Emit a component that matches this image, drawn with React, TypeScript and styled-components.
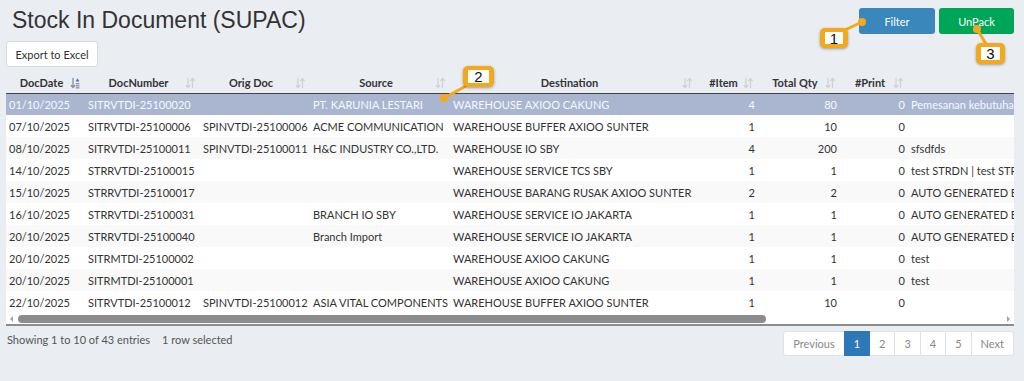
import React from 'react';
import styled, { createGlobalStyle, css } from 'styled-components';

const Global = createGlobalStyle`
  html, body { margin: 0; padding: 0; background: #eaedf2; }
  body { font-family: Lato, "Open Sans", sans-serif; color: #333; }
  * { box-sizing: border-box; }
`;

const Page = styled.div`
  position: relative;
  width: 1024px;
  height: 381px;
  padding: 0 10px 0 6px;
  overflow: hidden;
`;

const TopBar = styled.div`
  display: flex;
  justify-content: space-between;
  align-items: flex-start;
`;

const TitleBlock = styled.div`
  display: flex;
  flex-direction: column;
  align-items: flex-start;
`;

const Title = styled.h1`
  margin: 6px 0 0 6px;
  height: 28px;
  font: 400 23px/28px "Liberation Sans", Arial, sans-serif;
  color: #333;
`;

const ExportButton = styled.button`
  margin-top: 7px;
  height: 26px;
  width: 92px;
  padding: 0;
  background: #fff;
  border: 1px solid #d6d9de;
  border-radius: 3px;
  font: 400 11px Lato, sans-serif;
  color: #333;
`;

const ActionGroup = styled.div`
  display: flex;
  gap: 4px;
  margin-top: 8px;
`;

const ActionButton = styled.button<{ $tone: 'blue' | 'green'; $w: number }>`
  height: 26px;
  width: ${p => p.$w}px;
  border: none;
  border-radius: 3px;
  color: #fff;
  font: 400 11px Lato, sans-serif;
  background: ${p => (p.$tone === 'blue' ? '#3a87bb' : '#00a657')};
`;

const TableWrap = styled.div`
  margin-top: 5px;
  width: 1008px;
  overflow: hidden;
  border-bottom: 2px solid #8d8d8d;
`;

const Table = styled.table`
  border-collapse: collapse;
  table-layout: fixed;
  width: 1122px;
`;

const Th = styled.th`
  position: relative;
  height: 21px;
  padding: 0 18px 0 10px;
  font: 700 11px Lato, sans-serif;
  color: #333;
  text-align: center;
  white-space: nowrap;
  border-bottom: 1px solid #444;
`;

const SortIcon = styled.svg`
  position: absolute;
  right: 5px;
  top: 5px;
`;

const Row = styled.tr<{ $selected: boolean; $striped: boolean }>`
  background: ${p => (p.$striped ? '#f9f9f9' : '#fff')};
  color: #333;
  ${p =>
    p.$selected &&
    css`
      background: #aab6d0;
      color: #f6f8fc;
    `}
`;

const Td = styled.td<{ $align?: 'right' | 'left' }>`
  height: 22px;
  padding: 0 3px;
  font: 400 11px Lato, sans-serif;
  white-space: nowrap;
  overflow: hidden;
  text-align: ${p => p.$align || 'left'};
`;

const Scrollbar = styled.div`
  display: flex;
  align-items: center;
  height: 11px;
  background: #fff;
  padding: 0 4px;
  gap: 5px;
`;

const Arrow = styled.span<{ $dir: 'left' | 'right' }>`
  width: 0;
  height: 0;
  border-top: 3px solid transparent;
  border-bottom: 3px solid transparent;
  ${p =>
    p.$dir === 'left'
      ? css`border-right: 3px solid #a3a3a3;`
      : css`border-left: 3px solid #a3a3a3;`}
`;

const Track = styled.div`
  flex: 1;
  height: 8px;
`;

const Thumb = styled.div`
  height: 8px;
  border-radius: 4px;
  background: #8c8c8c;
`;

const Footer = styled.div`
  display: flex;
  justify-content: space-between;
  align-items: flex-start;
  margin-top: 5px;
`;

const Info = styled.div`
  font: 400 11px/18px Lato, sans-serif;
  color: #555;
  padding-left: 1px;
`;

const Selected = styled.span`
  margin-left: 12px;
`;

const Pager = styled.div`
  display: flex;
`;

const PageItem = styled.span<{ $active?: boolean; $first?: boolean; $last?: boolean }>`
  display: flex;
  align-items: center;
  height: 25px;
  padding: 0 9px;
  margin-left: -1px;
  background: #fff;
  border: 1px solid #e0e2e6;
  font: 400 11px Lato, sans-serif;
  color: #888;
  ${p => p.$first && css`border-radius: 3px 0 0 3px; margin-left: 0;`}
  ${p => p.$last && css`border-radius: 0 3px 3px 0;`}
  ${p =>
    p.$active &&
    css`
      background: #2f78b7;
      border-color: #2f78b7;
      color: #fff;
      position: relative;
    `}
`;

const Callout = styled.div<{ $x: number; $y: number; $w: number; $h: number }>`
  position: absolute;
  left: ${p => p.$x}px;
  top: ${p => p.$y}px;
  width: ${p => p.$w}px;
  height: ${p => p.$h}px;
  padding: 4px 5px;
  background: #f4a81c;
  border-radius: 5px;
  box-shadow: 0 1px 3px rgba(0, 0, 0, 0.35);
  display: flex;
`;

const CalloutInner = styled.div`
  flex: 1;
  background: #fff;
  display: flex;
  align-items: center;
  justify-content: center;
  font: 400 15px/1 "Liberation Sans", Arial, sans-serif;
  color: #111;
`;

const Overlay = styled.svg`
  position: absolute;
  left: 0;
  top: 0;
  pointer-events: none;
`;

const Sort: React.FC<{ active?: boolean }> = ({ active }) => (
  <SortIcon width="10" height="12" viewBox="0 0 10 12">
    <g fill="none" stroke={active ? '#8a8f99' : '#cfd2d7'} strokeWidth="1.3" strokeLinecap="round">
      <path d="M3 1.5V10.5M1.2 8.5L3 10.5L4.8 8.5" />
      {!active && <path d="M7.5 1.5V10.5M5.7 3.5L7.5 1.5L9.3 3.5" />}
    </g>
    {active && (
      <g>
        <path d="M5.6 4.5L7.5 1.2L9.4 4.5Z" fill="#5566c8" />
        <rect x="5.8" y="6" width="3.6" height="1.3" fill="#8a8f99" />
        <rect x="5.8" y="8.2" width="3.6" height="1.3" fill="#8a8f99" />
        <rect x="5.8" y="10.2" width="3.6" height="1.3" fill="#8a8f99" />
      </g>
    )}
  </SortIcon>
);

const columns = [
  { label: 'DocDate', w: 79, active: true },
  { label: 'DocNumber', w: 115 },
  { label: 'Orig Doc', w: 110 },
  { label: 'Source', w: 140 },
  { label: 'Destination', w: 247 },
  { label: '#Item', w: 61 },
  { label: 'Total Qty', w: 82 },
  { label: '#Print', w: 68 },
  { label: '', w: 220 },
];

const rows = [
  ['01/10/2025', 'SITRVTDI-25100020', '', 'PT. KARUNIA LESTARI', 'WAREHOUSE AXIOO CAKUNG', '4', '80', '0', 'Pemesanan kebutuhan barang'],
  ['07/10/2025', 'SITRVTDI-25100006', 'SPINVTDI-25100006', 'ACME COMMUNICATION', 'WAREHOUSE BUFFER AXIOO SUNTER', '1', '10', '0', ''],
  ['08/10/2025', 'SITRVTDI-25100011', 'SPINVTDI-25100011', 'H&C INDUSTRY CO.,LTD.', 'WAREHOUSE IO SBY', '4', '200', '0', 'sfsdfds'],
  ['14/10/2025', 'STRRVTDI-25100015', '', '', 'WAREHOUSE SERVICE TCS SBY', '1', '1', '0', 'test STRDN | test STRDN'],
  ['15/10/2025', 'STRRVTDI-25100017', '', '', 'WAREHOUSE BARANG RUSAK AXIOO SUNTER', '2', '2', '0', 'AUTO GENERATED BY SYSTEM'],
  ['16/10/2025', 'STRRVTDI-25100031', '', 'BRANCH IO SBY', 'WAREHOUSE SERVICE IO JAKARTA', '1', '1', '0', 'AUTO GENERATED BY SYSTEM'],
  ['20/10/2025', 'STRRVTDI-25100040', '', 'Branch Import', 'WAREHOUSE SERVICE IO JAKARTA', '1', '1', '0', 'AUTO GENERATED BY SYSTEM'],
  ['20/10/2025', 'SITRMTDI-25100002', '', '', 'WAREHOUSE AXIOO CAKUNG', '1', '1', '0', 'test'],
  ['20/10/2025', 'SITRMTDI-25100001', '', '', 'WAREHOUSE AXIOO CAKUNG', '1', '1', '0', 'test'],
  ['22/10/2025', 'SITRVTDI-25100012', 'SPINVTDI-25100012', 'ASIA VITAL COMPONENTS', 'WAREHOUSE BUFFER AXIOO SUNTER', '1', '10', '0', ''],
];

const rightCols = new Set([5, 6, 7]);

const callouts = [
  { n: '1', x: 820, y: 28, w: 28, h: 20 },
  { n: '2', x: 463, y: 66, w: 31, h: 21 },
  { n: '3', x: 976, y: 43, w: 29, h: 21 },
];

export default function App() {
  return (
    <Page>
      <Global />
      <TopBar>
        <TitleBlock>
          <Title>Stock In Document (SUPAC)</Title>
          <ExportButton>Export to Excel</ExportButton>
        </TitleBlock>
        <ActionGroup>
          <ActionButton $tone="blue" $w={76}>Filter</ActionButton>
          <ActionButton $tone="green" $w={75}>UnPack</ActionButton>
        </ActionGroup>
      </TopBar>

      <TableWrap>
        <Table>
          <colgroup>
            {columns.map((c, i) => (
              <col key={i} style={{ width: c.w }} />
            ))}
          </colgroup>
          <thead>
            <tr>
              {columns.map((c, i) => (
                <Th key={i}>
                  {c.label}
                  {c.label && <Sort active={c.active} />}
                </Th>
              ))}
            </tr>
          </thead>
          <tbody>
            {rows.map((r, i) => (
              <Row key={i} $selected={i === 0} $striped={i % 2 === 0}>
                {r.map((v, j) => (
                  <Td key={j} $align={rightCols.has(j) ? 'right' : 'left'}>
                    {v}
                  </Td>
                ))}
              </Row>
            ))}
          </tbody>
        </Table>
        <Scrollbar>
          <Arrow $dir="left" />
          <Track>
            <Thumb style={{ width: '76%' }} />
          </Track>
          <Arrow $dir="right" />
        </Scrollbar>
      </TableWrap>

      <Footer>
        <Info>
          Showing 1 to 10 of 43 entries<Selected>1 row selected</Selected>
        </Info>
        <Pager>
          <PageItem $first>Previous</PageItem>
          <PageItem $active>1</PageItem>
          <PageItem>2</PageItem>
          <PageItem>3</PageItem>
          <PageItem>4</PageItem>
          <PageItem>5</PageItem>
          <PageItem $last>Next</PageItem>
        </Pager>
      </Footer>

      <Overlay width="1024" height="381">
        <g stroke="#f4a81c" strokeWidth="3" strokeLinecap="round" fill="#f4a81c">
          <line x1="845" y1="30" x2="862" y2="22" />
          <circle cx="862" cy="22" r="2.5" />
          <line x1="466" y1="86" x2="444" y2="98" />
          <circle cx="444" cy="98" r="2.5" />
          <line x1="977" y1="29" x2="986" y2="44" />
          <circle cx="977" cy="29" r="2.5" />
        </g>
      </Overlay>
      {callouts.map(c => (
        <Callout key={c.n} $x={c.x} $y={c.y} $w={c.w} $h={c.h}>
          <CalloutInner>{c.n}</CalloutInner>
        </Callout>
      ))}
    </Page>
  );
}
